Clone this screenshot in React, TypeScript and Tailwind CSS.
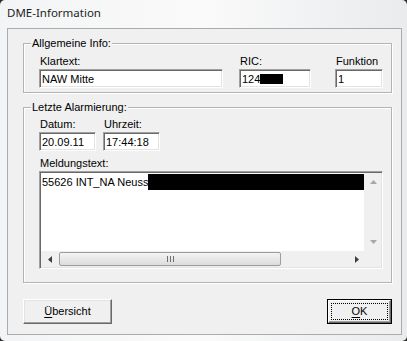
import type { ReactNode } from 'react';

const sunken =
  'bg-white border border-t-[#a0a0a0] border-l-[#a0a0a0] border-b-white border-r-white shadow-[inset_1px_1px_0_#696969,inset_-1px_-1px_0_#e3e3e3]';

const raised =
  'border border-t-white border-l-white border-r-[#696969] border-b-[#696969] shadow-[inset_-1px_-1px_0_#a0a0a0,inset_1px_1px_0_#e3e3e3]';

function Group({ title, className, children }: { title: string; className: string; children: ReactNode }) {
  return (
    <div className={`w-[369px] border border-[#b4b4b4] shadow-[inset_1px_1px_0_#fff,1px_1px_0_#fff] flex flex-col ${className}`}>
      <span className="-mt-[7px] ml-[7px] w-fit px-[1px] bg-[#f0f0f0] leading-[13px]">{title}</span>
      {children}
    </div>
  );
}

function Field({ label, width, children }: { label: string; width: string; children: ReactNode }) {
  return (
    <div className={`flex flex-col ${width}`}>
      <span className="leading-[13px] pl-[1px]">{label}</span>
      <div className={`mt-[1px] h-[19px] pl-[2px] pt-[3px] leading-[13px] flex items-start whitespace-nowrap ${sunken}`}>
        {children}
      </div>
    </div>
  );
}

function Arrow({ dir, color }: { dir: 'up' | 'down' | 'left' | 'right'; color: string }) {
  const vertical = dir === 'up' || dir === 'down';
  const d = {
    up: 'M3.5 0L7 4H0z',
    down: 'M0 0H7L3.5 4z',
    left: 'M0 3.5L4 0V7z',
    right: 'M0 0L4 3.5L0 7z',
  }[dir];
  return (
    <svg width={vertical ? 7 : 4} height={vertical ? 4 : 7} viewBox={vertical ? '0 0 7 4' : '0 0 4 7'}>
      <path d={d} fill={color} />
    </svg>
  );
}

export default function App() {
  return (
    <div className="w-[407px] h-[341px] bg-[#2a2a2a]">
      <div className="h-full rounded-[5px] bg-gradient-to-r from-[#f3f4f5] via-[#fafafa] to-[#e9ebed] flex flex-col pl-[7px] pr-[5px] font-['Liberation_Sans',Arial,sans-serif] text-[11px] text-black">
        {/* title bar */}
        <div className="h-[28px] pt-[6px] leading-[14px] text-[11.5px] font-['Noto_Sans',sans-serif] text-[#1e1e1e]">
          DME-Information
        </div>

        {/* client area */}
        <div className="h-[307px] border border-[#a9adb2] bg-[#f0f0f0] flex flex-col pl-[15px]">
          <Group title="Allgemeine Info:" className="mt-[14px] pb-[4px]">
            <div className="flex pl-[15px] mt-[5px]">
              <Field label="Klartext:" width="w-[184px]">NAW Mitte</Field>
              <div className="ml-[16px]">
                <Field label="RIC:" width="w-[72px]">
                  <span>124</span>
                  <span className="mt-[1px] w-[23px] h-[10px] bg-black" />
                </Field>
              </div>
              <div className="ml-[24px]">
                <Field label="Funktion" width="w-[48px]">1</Field>
              </div>
            </div>
          </Group>

          <Group title="Letzte Alarmierung:" className="mt-[14px] pb-[13px]">
            <div className="flex pl-[15px] mt-[4px] gap-[7px]">
              <Field label="Datum:" width="w-[57px]">20.09.11</Field>
              <Field label="Uhrzeit:" width="w-[57px]">17:44:18</Field>
            </div>
            <span className="ml-[16px] mt-[6px] leading-[13px]">Meldungstext:</span>
            <div className={`mt-[1px] ml-[15px] w-[344px] h-[98px] flex flex-col ${sunken}`}>
              <div className="flex flex-1 mt-[1px] ml-[1px] mr-[1px]">
                <div className="flex-1 flex items-start pt-[1px] pl-[1px]">
                  <span className="leading-[16px] whitespace-nowrap">55626 INT_NA Neuss</span>
                  <span className="flex-1 h-[16px] bg-black" />
                </div>
                <div className="w-[17px] bg-[#f0f0f0] flex flex-col justify-between items-center pt-[7px] pb-[7px] pl-[1px]">
                  <Arrow dir="up" color="#a6a6a6" />
                  <Arrow dir="down" color="#a6a6a6" />
                </div>
              </div>
              <div className="flex h-[16px] ml-[1px] mr-[1px] mb-[1px]">
                <div className="flex-1 flex items-center bg-[#f0f0f0]">
                  <div className="w-[17px] flex justify-center">
                    <Arrow dir="left" color="#404040" />
                  </div>
                  <div className="ml-[1px] w-[222px] h-[14px] rounded-[2px] border border-[#9c9c9c] bg-gradient-to-b from-[#f4f4f4] to-[#dcdcdc] flex items-center justify-center">
                    <svg width="7" height="6" viewBox="0 0 7 6">
                      <rect x="0" y="0" width="1" height="6" fill="#6e6e6e" />
                      <rect x="3" y="0" width="1" height="6" fill="#6e6e6e" />
                      <rect x="6" y="0" width="1" height="6" fill="#6e6e6e" />
                    </svg>
                  </div>
                  <div className="flex-1" />
                  <div className="w-[17px] flex justify-center pl-[2px]">
                    <Arrow dir="right" color="#404040" />
                  </div>
                </div>
                <div className="w-[17px] bg-[#f0f0f0]" />
              </div>
            </div>
          </Group>

          <div className="flex w-[369px] justify-between mt-[16px]">
            <button className={`w-[89px] h-[25px] bg-[#f0f0f0] leading-[13px] ${raised}`}>
              <span className="underline underline-offset-[2px]">Ü</span>bersicht
            </button>
            <button className="w-[65px] h-[25px] border border-black bg-[#f0f0f0] flex">
              <span className="flex-1 flex border border-t-white border-l-white border-r-[#696969] border-b-[#696969] shadow-[inset_-1px_-1px_0_#a0a0a0] p-[2px]">
                <span className="flex-1 flex items-center justify-center border border-dotted border-black leading-[13px]">
                  <span className="underline underline-offset-[2px]">O</span>K
                </span>
              </span>
            </button>
          </div>
        </div>
      </div>
    </div>
  );
}
